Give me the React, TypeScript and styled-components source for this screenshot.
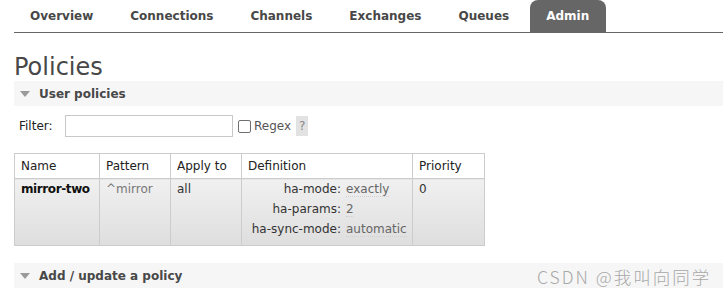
import React from 'react';
import styled, { createGlobalStyle } from 'styled-components';

const GlobalStyle = createGlobalStyle`
    body {
        margin: 0;
        background: #fff;
        font: 12px "DejaVu Sans", Verdana, sans-serif;
        color: #333;
    }
`;

const tabs = ['Overview', 'Connections', 'Channels', 'Exchanges', 'Queues', 'Admin'];

const definition = [
    { key: 'ha-mode:', value: 'exactly' },
    { key: 'ha-params:', value: '2' },
    { key: 'ha-sync-mode:', value: 'automatic' },
];

// 접기 화살표
const Arrow = () => (
    <svg width="10" height="6" viewBox="0 0 10 6">
        <polygon points="0,0 10,0 5,6" fill="#9a9a9a" />
    </svg>
);

const App = () => {
    return (
        <Page>
            <GlobalStyle />
            <Menu>
                {tabs.map((t) => (
                    <Tab key={t} active={t === 'Admin'}>{t}</Tab>
                ))}
            </Menu>

            <Title>Policies</Title>

            <SectionBar>
                <Arrow />
                <SectionTitle>User policies</SectionTitle>
            </SectionBar>

            <FilterRow>
                <FilterLabel>Filter:</FilterLabel>
                <FilterInput type="text" />
                <Check type="checkbox" />
                <RegexLabel>Regex</RegexLabel>
                <Help>?</Help>
            </FilterRow>

            <PolicyTable>
                <colgroup>
                    <col style={{ width: 85 }} />
                    <col style={{ width: 71 }} />
                    <col style={{ width: 71 }} />
                    <col style={{ width: 171 }} />
                    <col style={{ width: 72 }} />
                </colgroup>
                <thead>
                    <tr>
                        <Th>Name</Th>
                        <Th>Pattern</Th>
                        <Th>Apply to</Th>
                        <Th>Definition</Th>
                        <Th>Priority</Th>
                    </tr>
                </thead>
                <tbody>
                    <tr>
                        <Td><b>mirror-two</b></Td>
                        <Td muted>^mirror</Td>
                        <Td>all</Td>
                        <Td>
                            <DefGrid>
                                {definition.map((d) => (
                                    <React.Fragment key={d.key}>
                                        <DefKey>{d.key}</DefKey>
                                        <DefValue><span>{d.value}</span></DefValue>
                                    </React.Fragment>
                                ))}
                            </DefGrid>
                        </Td>
                        <Td>0</Td>
                    </tr>
                </tbody>
            </PolicyTable>

            <SectionBar bottom>
                <Arrow />
                <SectionTitle>Add / update a policy</SectionTitle>
            </SectionBar>

            <Watermark>CSDN @我叫向同学</Watermark>
        </Page>
    );
};

const Page = styled.div`
    position: relative;
    height: 299px;
    overflow: hidden;
    padding-left: 14px;
`;

const Menu = styled.div`
    display: flex;
    height: 32px;
    border-bottom: 1px solid #666;
`;

const Tab = styled.div<{ active?: boolean }>`
    padding: 0 17px 0 16px;
    margin-right: 4px;
    line-height: 33px;
    font-weight: bold;
    color: ${(p) => (p.active ? '#fff' : '#484848')};
    background: ${(p) => (p.active ? '#666' : 'transparent')};
    border-radius: 8px 8px 0 0;
`;

const Title = styled.h1`
    margin: 20px 0 0;
    font-size: 24px;
    font-weight: normal;
    line-height: 28px;
    color: #484848;
`;

const SectionBar = styled.div<{ bottom?: boolean }>`
    display: flex;
    align-items: center;
    gap: 9px;
    height: 25px;
    padding-left: 6px;
    margin-top: ${(p) => (p.bottom ? '17px' : '0')};
    background: #f6f6f6;
`;

const SectionTitle = styled.span`
    font-weight: bold;
    color: #484848;
`;

const FilterRow = styled.div`
    display: flex;
    align-items: center;
    margin-top: 9px;
    padding-left: 5px;
    height: 22px;
`;

const FilterLabel = styled.span`
    width: 46px;
    color: #222;
`;

const FilterInput = styled.input`
    box-sizing: border-box;
    width: 168px;
    height: 22px;
    margin: 0;
    border: 1px solid #c8c8c8;
    outline: none;
`;

const Check = styled.input`
    appearance: none;
    box-sizing: border-box;
    width: 13px;
    height: 13px;
    margin: 0 3px 0 5px;
    border: 1px solid #707070;
    border-radius: 2px;
    background: #fff;
`;

const RegexLabel = styled.span`
    color: #555;
`;

const Help = styled.span`
    margin-left: 5px;
    padding: 0 3px;
    line-height: 20px;
    background: #e2e2e2;
    color: #888;
`;

const PolicyTable = styled.table`
    margin-top: 16px;
    border-collapse: collapse;
    table-layout: fixed;
    width: 471px;
`;

const Th = styled.th`
    padding: 5px 6px;
    line-height: 14px;
    text-align: left;
    font-weight: normal;
    color: #222;
    background: #fff;
    border: 1px solid #ccc;
`;

const Td = styled.td<{ muted?: boolean }>`
    padding: 0 6px 6px;
    line-height: 20px;
    vertical-align: top;
    white-space: nowrap;
    color: ${(p) => (p.muted ? '#777' : '#333')};
    background: linear-gradient(#f0f0f0, #dedede);
    border: 1px solid #ccc;
    b {
        color: #111;
        letter-spacing: -0.4px;
    }
`;

const DefGrid = styled.div`
    display: grid;
    grid-template-columns: 93px 1fr;
    column-gap: 5px;
`;

const DefKey = styled.span`
    text-align: right;
    color: #333;
`;

const DefValue = styled.span`
    color: #666;
    span {
        border-bottom: 1px dotted #d0d0d0;
    }
`;

const Watermark = styled.div`
    position: absolute;
    left: 537px;
    top: 264px;
    font: 300 17.5px "Noto Sans CJK SC", sans-serif;
    color: #a8a8a8;
    letter-spacing: 2px;
`;

export default App;
